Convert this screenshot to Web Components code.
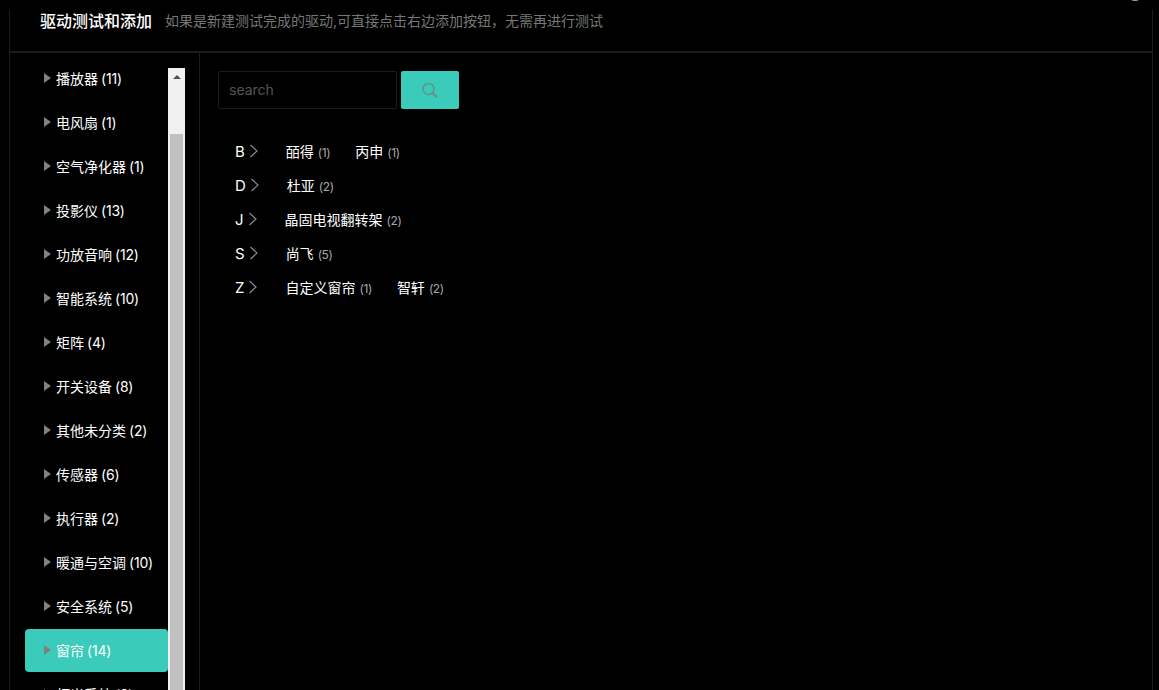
<!DOCTYPE html>
<html>
<head>
<meta charset="utf-8">
<style>
html,body{margin:0;height:100%;background:#000;overflow:hidden}
body{font-family:Inter,"Noto Sans CJK SC",sans-serif}
</style>
</head>
<body>
<driver-page>
  <side-item slot="side" count="11">播放器</side-item>
  <side-item slot="side" count="1">电风扇</side-item>
  <side-item slot="side" count="1">空气净化器</side-item>
  <side-item slot="side" count="13">投影仪</side-item>
  <side-item slot="side" count="12">功放音响</side-item>
  <side-item slot="side" count="10">智能系统</side-item>
  <side-item slot="side" count="4">矩阵</side-item>
  <side-item slot="side" count="8">开关设备</side-item>
  <side-item slot="side" count="2">其他未分类</side-item>
  <side-item slot="side" count="6">传感器</side-item>
  <side-item slot="side" count="2">执行器</side-item>
  <side-item slot="side" count="10">暖通与空调</side-item>
  <side-item slot="side" count="5">安全系统</side-item>
  <side-item slot="side" count="14" active>窗帘</side-item>
  <side-item slot="side" count="8">灯光系统</side-item>

  <brand-row letter="B"><brand-link count="1">皕得</brand-link><brand-link count="1">丙申</brand-link></brand-row>
  <brand-row letter="D"><brand-link count="2">杜亚</brand-link></brand-row>
  <brand-row letter="J"><brand-link count="2">晶固电视翻转架</brand-link></brand-row>
  <brand-row letter="S"><brand-link count="5">尚飞</brand-link></brand-row>
  <brand-row letter="Z"><brand-link count="1">自定义窗帘</brand-link><brand-link count="2">智轩</brand-link></brand-row>
</driver-page>
<close-dot></close-dot>

<script>
customElements.define("driver-page", class extends HTMLElement {
  constructor() {
    super();
    this.attachShadow({ mode: "open" }).innerHTML = `<style>
      :host{display:flex;flex-direction:column;height:681px;margin:9px 6px 0 9px;border-left:1px solid #1c1c1c;border-right:1px solid #1c1c1c;color:#fff;overflow:hidden}
      header{display:flex;align-items:center;flex:none;height:44px;padding:0 0 18px 30px;box-sizing:border-box;border-bottom:2px solid #1c1c1c}
      h1{margin:0;font-size:16px;font-weight:500;line-height:20px}
      p{margin:0 0 0 13px;font-size:14px;line-height:20px;color:#777}
      .body{flex:1;display:flex;min-height:0}
      aside{width:190px;flex:none;display:flex;border-right:1px solid #1c1c1c;box-sizing:border-box;padding:4px 14px 0 15px;height:100%}
      .list{width:143px;flex:none;display:flex;flex-direction:column}
      main{flex:1;padding:18px}
      form{display:flex;gap:4px;margin-bottom:25px}
      .input{width:179px;height:38px;box-sizing:border-box;border:1px solid #1c1c1c;border-radius:2px;padding:0 10px;font-size:14px;line-height:36px;color:#555}
      button{width:58px;height:38px;border:0;border-radius:2px;background:#3bcbba;padding:0;display:flex;align-items:center;justify-content:center}
      .rows{display:flex;flex-direction:column;padding-left:17px}
    </style>
    <header><h1>驱动测试和添加</h1><p>如果是新建测试完成的驱动,可直接点击右边添加按钮，无需再进行测试</p></header>
    <div class="body">
      <aside>
        <div class="list"><slot name="side"></slot></div>
        <scroll-bar></scroll-bar>
      </aside>
      <main>
        <form>
          <div class="input">search</div>
          <button type="button"><svg width="18" height="18" viewBox="0 0 18 18" fill="none" stroke="#5f958d" stroke-width="1.5"><circle cx="7.5" cy="8" r="5.5"/><path d="M11.5 12l4.5 4.5" stroke-width="2.2"/></svg></button>
        </form>
        <div class="rows"><slot></slot></div>
      </main>
    </div>`;
  }
});

customElements.define("scroll-bar", class extends HTMLElement {
  constructor() {
    super();
    this.attachShadow({ mode: "open" }).innerHTML = `<style>
      :host{display:flex;flex-direction:column;width:17px;flex:none;background:#f1f1f1;align-items:center;margin-top:11px}
      .up{height:17px;width:17px;display:flex;align-items:center;justify-content:center;flex:none;margin-bottom:49px}
      .up i{border:4px solid transparent;border-top:0;border-bottom:4px solid #505050;width:0;height:0}
      .thumb{width:13px;flex:1;background:#c1c1c1}
    </style><div class="up"><i></i></div><div class="thumb"></div>`;
  }
});

customElements.define("side-item", class extends HTMLElement {
  constructor() {
    super();
    this.attachShadow({ mode: "open" }).innerHTML = `<style>
      :host{display:flex;align-items:center;height:43px;margin-bottom:1px;flex:none;border-radius:4px;padding-left:19px;font-size:14px;color:#fff;box-sizing:border-box;white-space:nowrap}
      :host([active]){background:#3bcbba}
      i{width:0;height:0;border-left:7px solid #808080;border-top:5.5px solid transparent;border-bottom:5.5px solid transparent;margin-right:5px;margin-top:-2px}
      .t{margin-top:-2px}
      .n{margin-left:3px;font-size:14px;letter-spacing:-.2px}
    </style><i></i><span class="t"><slot></slot></span><span class="n"></span>`;
  }
  connectedCallback() {
    this.shadowRoot.querySelector(".n").textContent = "(" + this.getAttribute("count") + ")";
  }
});

customElements.define("brand-row", class extends HTMLElement {
  constructor() {
    super();
    this.attachShadow({ mode: "open" }).innerHTML = `<style>
      :host{display:flex;align-items:center;height:34px}
      .l{font-size:15px;color:#fff}
      svg{flex:none;margin:0 27px 0 4px}
      .items{display:flex;gap:25px}
    </style><span class="l"></span><svg width="10" height="14" viewBox="0 0 10 14" fill="none" stroke="#8a8a8a" stroke-width="1.2"><path d="M1.5 1l6.5 6-6.5 6"/></svg><div class="items"><slot></slot></div>`;
  }
  connectedCallback() {
    this.shadowRoot.querySelector(".l").textContent = this.getAttribute("letter");
  }
});

customElements.define("brand-link", class extends HTMLElement {
  constructor() {
    super();
    this.attachShadow({ mode: "open" }).innerHTML = `<style>
      :host{display:inline-block;font-size:14px;color:#fff;white-space:nowrap}
      .n{font-size:12px;color:#a8a8a8;margin-left:4px;letter-spacing:-.4px}
    </style><slot></slot><span class="n"></span>`;
  }
  connectedCallback() {
    this.shadowRoot.querySelector(".n").textContent = "(" + this.getAttribute("count") + ")";
  }
});

// close button of the dialog, almost entirely above the top edge
customElements.define("close-dot", class extends HTMLElement {
  constructor() {
    super();
    this.attachShadow({ mode: "open" }).innerHTML = `<style>
      :host{position:fixed;top:-15px;left:1127px;width:16px;height:16px;border-radius:50%;background:#aaa}
    </style>`;
  }
});
</script>
</body>
</html>
